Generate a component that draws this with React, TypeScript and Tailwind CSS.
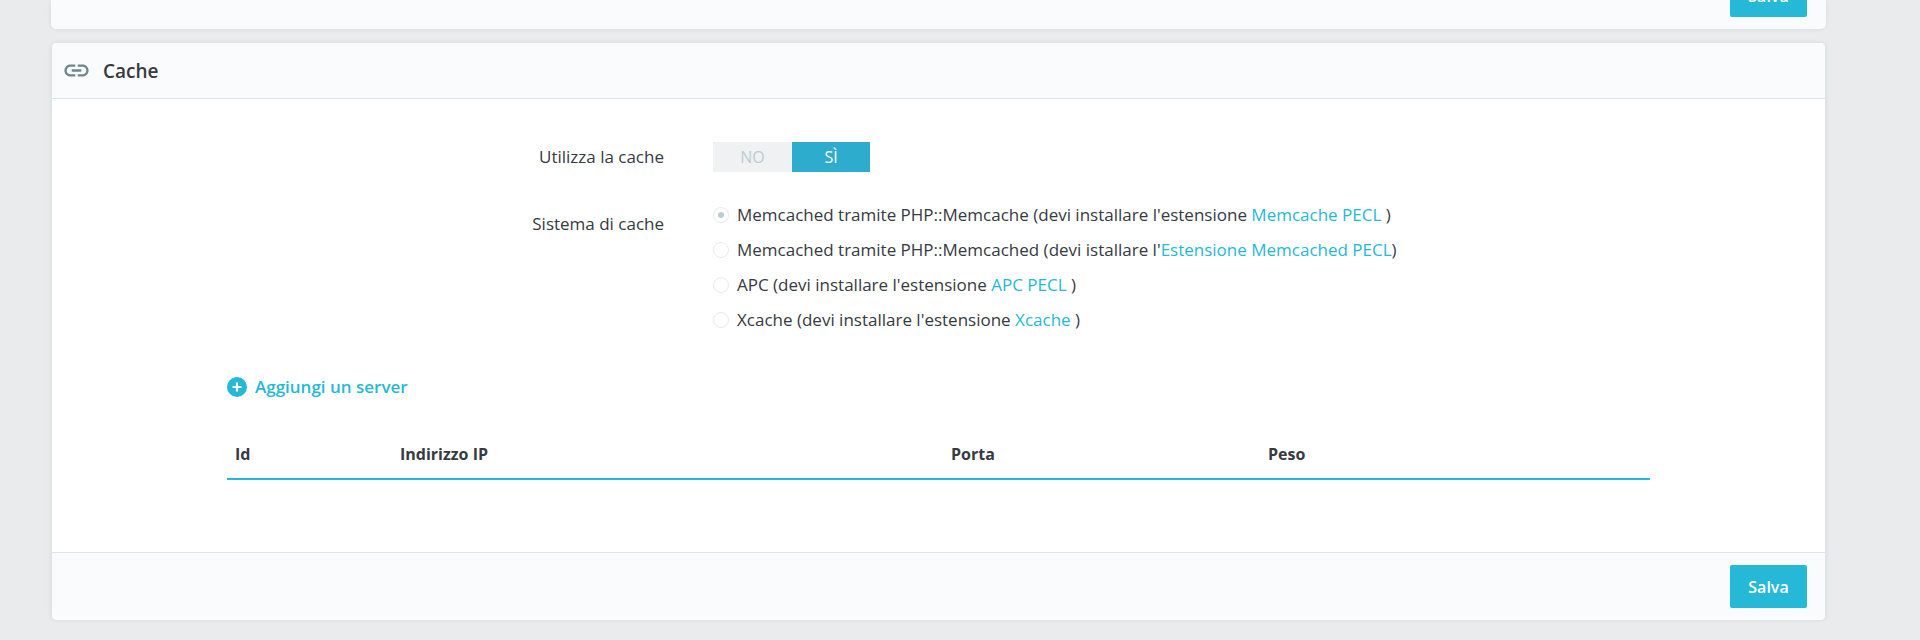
import React from "react";

const font = { fontFamily: '"Open Sans", sans-serif' };

const LinkIcon = () => (
  <svg width="29" height="29" viewBox="0 0 24 24" fill="#6c868e" className="shrink-0">
    <path d="M3.9 12c0-1.71 1.39-3.1 3.1-3.1h4V7H7c-2.76 0-5 2.24-5 5s2.24 5 5 5h4v-1.9H7c-1.71 0-3.1-1.39-3.1-3.1zM8 13h8v-2H8v2zm9-6h-4v1.9h4c1.71 0 3.1 1.39 3.1 3.1s-1.39 3.1-3.1 3.1h-4V17h4c2.76 0 5-2.24 5-5s-2.24-5-5-5z" />
  </svg>
);

const PlusIcon = () => (
  <svg width="20" height="20" viewBox="0 0 20 20" className="shrink-0">
    <circle cx="10" cy="10" r="10" fill="#25b9d7" />
    <path d="M10 5.5v9M5.5 10h9" stroke="#fff" strokeWidth="2.2" />
  </svg>
);

const Radio = ({ checked }: { checked?: boolean }) => (
  <span className="w-4 h-4 rounded-full border border-[#e8ebed] bg-white shrink-0 flex items-center justify-center">
    {checked && <span className="w-1.5 h-1.5 rounded-full bg-[#bbcdd2]" />}
  </span>
);

const Link = ({ children }: { children: React.ReactNode }) => (
  <span className="text-[#25b9d7]">{children}</span>
);

const options: { node: React.ReactNode; checked?: boolean }[] = [
  {
    checked: true,
    node: (
      <>
        Memcached tramite PHP::Memcache (devi installare l'estensione <Link>Memcache PECL</Link> )
      </>
    ),
  },
  {
    node: (
      <>
        Memcached tramite PHP::Memcached (devi istallare l'<Link>Estensione Memcached PECL</Link>)
      </>
    ),
  },
  {
    node: (
      <>
        APC (devi installare l'estensione <Link>APC PECL</Link> )
      </>
    ),
  },
  {
    node: (
      <>
        Xcache (devi installare l'estensione <Link>Xcache</Link> )
      </>
    ),
  },
];

const SaveButton = () => (
  <button className="w-[77px] h-[43px] shrink-0 rounded-[2px] bg-[#25b9d7] text-white text-[16px] font-semibold">
    Salva
  </button>
);

export default function App() {
  return (
    <div style={font} className="h-[640px] overflow-hidden bg-[#e9ebec] text-[#363a41] text-[17px]">
      <div className="w-[1775px] ml-[51px]">
        {/* previous card, cut off by the top of the page */}
        <div className="h-[29px] flex items-end justify-end pb-3 pr-[19px] bg-[#fafbfc] rounded-b-[5px] shadow-[0_0_4px_rgba(0,0,0,0.08)]">
          <SaveButton />
        </div>

        {/* Cache card */}
        <div className="mt-[14px] rounded-[5px] border-x border-[#dbe6e9] bg-white shadow-[0_0_4px_rgba(0,0,0,0.08)] overflow-hidden">
          <div className="h-[56px] flex items-center gap-[12px] pl-[10px] bg-[#fafbfc] border-b border-[#dbe6e9]">
            <LinkIcon />
            <span className="mt-[2px] text-[19px] font-semibold">Cache</span>
          </div>

          <div className="h-[453px] pt-[43px]">
            <div className="flex items-center h-[30px]">
              <div className="w-[612px] text-right">Utilizza la cache</div>
              <div className="ml-[49px] flex h-[30px] text-[16px]">
                <div className="w-[79px] flex items-center justify-center bg-[#eff1f2] text-[#bbcdd2]">NO</div>
                <div className="w-[78px] flex items-center justify-center bg-[#2eacce] text-white">SÌ</div>
              </div>
            </div>

            <div className="flex mt-[25px]">
              <div className="w-[612px] text-right pt-[17px] leading-[20px]">Sistema di cache</div>
              <div className="ml-[49px]">
                {options.map((o, i) => (
                  <div key={i} className="h-[35px] flex items-center gap-2">
                    <Radio checked={o.checked} />
                    <span>{o.node}</span>
                  </div>
                ))}
              </div>
            </div>

            <div className="ml-[175px] mt-[40px] flex items-center gap-[8px] text-[#25b9d7] text-[17px] font-semibold leading-[20px]">
              <PlusIcon />
              <span>Aggiungi un server</span>
            </div>

            <div className="ml-[175px] w-[1423px] mt-[28px] h-[55px] pt-[4px] flex items-center border-b-2 border-[#25b9d7] text-[16px] font-bold">
              <div className="w-[173px] pl-[8px]">Id</div>
              <div className="w-[551px]">Indirizzo IP</div>
              <div className="w-[317px]">Porta</div>
              <div>Peso</div>
            </div>
          </div>

          <div className="h-[68px] flex items-center justify-end pr-[18px] bg-[#fafbfc] border-t border-[#dbe6e9]">
            <SaveButton />
          </div>
        </div>
      </div>
    </div>
  );
}
